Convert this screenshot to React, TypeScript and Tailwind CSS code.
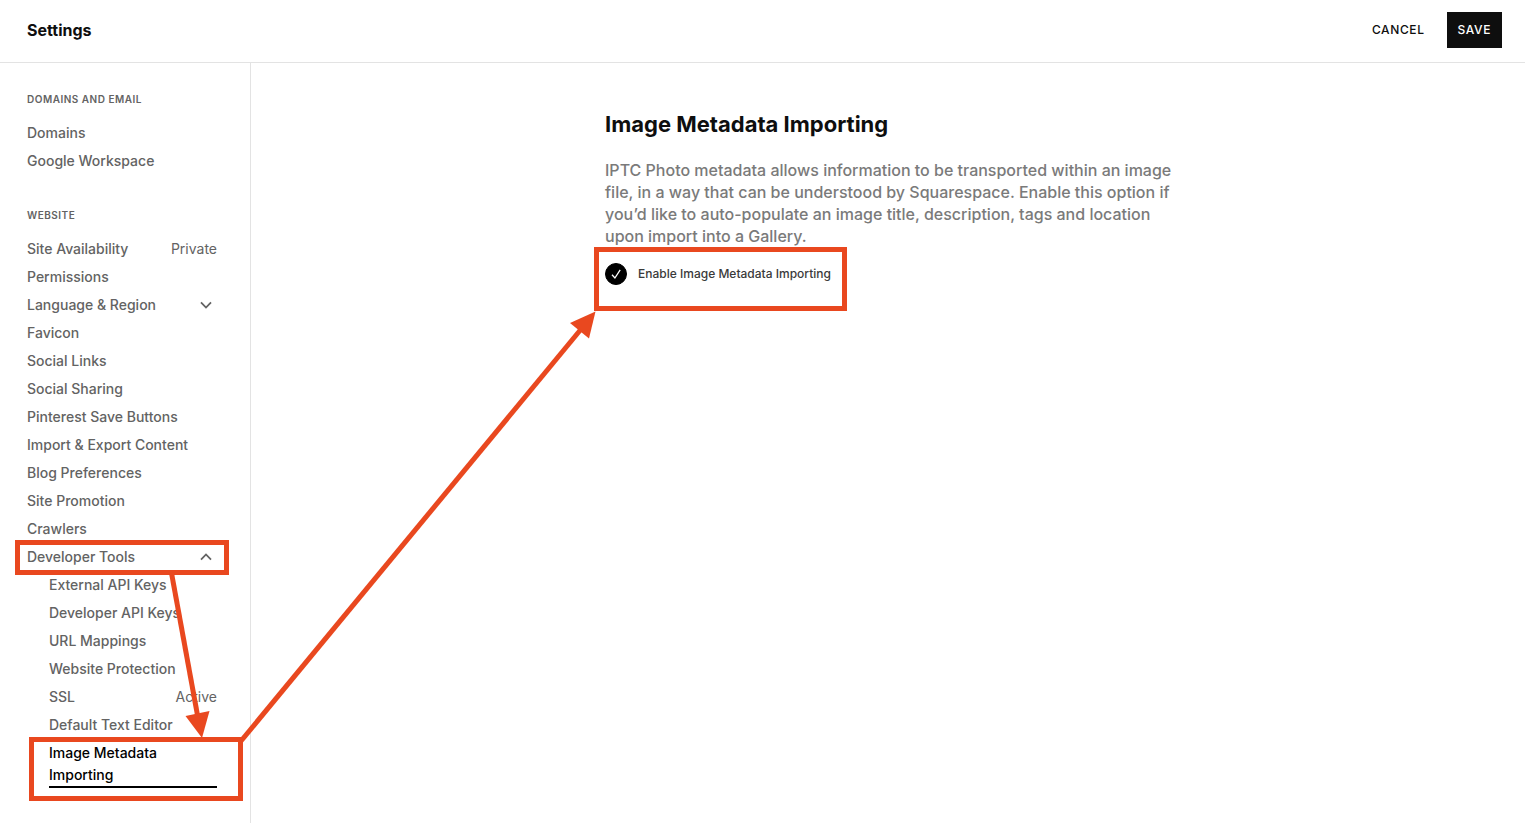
import { useState } from 'react';

interface NavItem {
  label: string;
  value?: string;
  open?: boolean;
  active?: boolean;
  marked?: boolean;
  children?: NavItem[];
}

interface NavSection {
  title: string;
  items: NavItem[];
}

const sections: NavSection[] = [
  {
    title: 'Domains and Email',
    items: [{ label: 'Domains' }, { label: 'Google Workspace' }],
  },
  {
    title: 'Website',
    items: [
      { label: 'Site Availability', value: 'Private' },
      { label: 'Permissions' },
      { label: 'Language & Region', open: false },
      { label: 'Favicon' },
      { label: 'Social Links' },
      { label: 'Social Sharing' },
      { label: 'Pinterest Save Buttons' },
      { label: 'Import & Export Content' },
      { label: 'Blog Preferences' },
      { label: 'Site Promotion' },
      { label: 'Crawlers' },
      {
        label: 'Developer Tools',
        open: true,
        marked: true,
        children: [
          { label: 'External API Keys' },
          { label: 'Developer API Keys' },
          { label: 'URL Mappings' },
          { label: 'Website Protection' },
          { label: 'SSL', value: 'Active' },
          { label: 'Default Text Editor' },
          { label: 'Image Metadata Importing', active: true },
        ],
      },
    ],
  },
];

const Chevron = ({ up }: { up: boolean }) => (
  <svg width="12" height="8" viewBox="0 0 12 8" fill="none" stroke="currentColor" strokeWidth="1.8" className="mr-[5px]">
    <path d={up ? 'M1 6.7 6 1.5l5 5.2' : 'M1 1.3 6 6.5l5-5.2'} />
  </svg>
);

const NavRow = ({ item }: { item: NavItem }) => {
  if (item.active) {
    return (
      <li className="relative py-[3px]">
        <a href="#" aria-current="page" className="block border-b-2 border-black text-black">
          <span className="block w-32">{item.label}</span>
        </a>
        <span className="pointer-events-none absolute -top-[2px] -right-[26px] -bottom-[10px] -left-5 border-5 border-[#e9481f]" />
      </li>
    );
  }

  return (
    <li>
      <div className="relative">
        {item.open === undefined ? (
          <a href="#" className="flex items-center justify-between py-[3px]">
            <span>{item.label}</span>
            {item.value && <span className="font-normal">{item.value}</span>}
          </a>
        ) : (
          <button type="button" aria-expanded={item.open} className="flex w-full items-center justify-between py-[3px]">
            <span>{item.label}</span>
            <Chevron up={item.open} />
          </button>
        )}
        {item.marked && (
          <span className="pointer-events-none absolute -top-[3px] -right-3 -bottom-1 -left-3 border-5 border-[#e9481f]" />
        )}
      </div>
      {item.children && (
        <ul className="pl-[22px]">
          {item.children.map((child) => (
            <NavRow key={child.label} item={child} />
          ))}
        </ul>
      )}
    </li>
  );
};

const Arrows = () => (
  <svg width="620" height="823" fill="#e9481f" stroke="#e9481f" className="pointer-events-none absolute top-0 left-0">
    <path d="M171.500 573 198 718" strokeWidth="5" />
    <path d="M185.500 716 209.500 711 202 738z" stroke="none" />
    <path d="M241 741 582 328" strokeWidth="5" />
    <path d="M595.500 311.500 570 323 589 338.500z" stroke="none" />
  </svg>
);

const App = () => {
  const [enabled, setEnabled] = useState(true);

  return (
    <div className="relative flex min-h-screen flex-col bg-white font-['Inter',sans-serif] text-[#0e0e0e]">
      <header className="flex items-center justify-between border-b border-[#e3e3e3] pt-3 pr-[23px] pb-[14px] pl-[27px]">
        <h1 className="text-base font-bold">Settings</h1>
        <div className="flex items-center gap-[22px] text-xs font-medium tracking-wider">
          <button type="button" className="h-9">
            CANCEL
          </button>
          <button type="button" className="h-9 bg-[#0e0e0e] px-[11px] text-white">
            SAVE
          </button>
        </div>
      </header>

      <div className="flex flex-1">
        <nav className="flex w-[251px] shrink-0 flex-col gap-[34px] border-r border-[#e3e3e3] pt-[30px] pr-[33px] pb-8 pl-[27px] text-sm leading-[22px] font-medium text-[#636363]">
          {sections.map((section) => (
            <section key={section.title}>
              <h2 className="pb-[14px] text-[10px] leading-3 font-semibold tracking-wider uppercase">{section.title}</h2>
              <ul>
                {section.items.map((item) => (
                  <NavRow key={item.label} item={item} />
                ))}
              </ul>
            </section>
          ))}
        </nav>

        <main className="flex-1 px-6 pt-[46px]">
          <div className="mx-auto max-w-[566px]">
            <h2 className="text-[22px] leading-[30px] font-bold">Image Metadata Importing</h2>
            <p className="-mr-3 mt-5 text-base leading-[22px] font-medium text-[#7a7a7a]">
              IPTC Photo metadata allows information to be transported within an image file, in a way that can be
              understood by Squarespace. Enable this option if you’d like to auto-populate an image title, description,
              tags and location upon import into a Gallery.
            </p>
            <div className="relative mt-4 w-fit">
              <label className="flex items-center gap-[11px] text-xs leading-[22px] font-medium text-[#3a3a3a]">
                <span className="relative flex">
                  <input
                    type="checkbox"
                    checked={enabled}
                    onChange={(event) => setEnabled(event.target.checked)}
                    className="size-[22px] appearance-none rounded-full border border-black checked:bg-black"
                  />
                  <svg viewBox="0 0 22 22" fill="none" stroke="white" strokeWidth="1.3" className="pointer-events-none absolute inset-0">
                    <path d="M7 11.800 9.900 15 15.200 6.800" />
                  </svg>
                </span>
                Enable Image Metadata Importing
              </label>
              <span className="pointer-events-none absolute -top-4 -right-4 -bottom-[26px] -left-[11px] border-5 border-[#e9481f]" />
            </div>
          </div>
        </main>
      </div>

      <Arrows />
    </div>
  );
};

export default App;
